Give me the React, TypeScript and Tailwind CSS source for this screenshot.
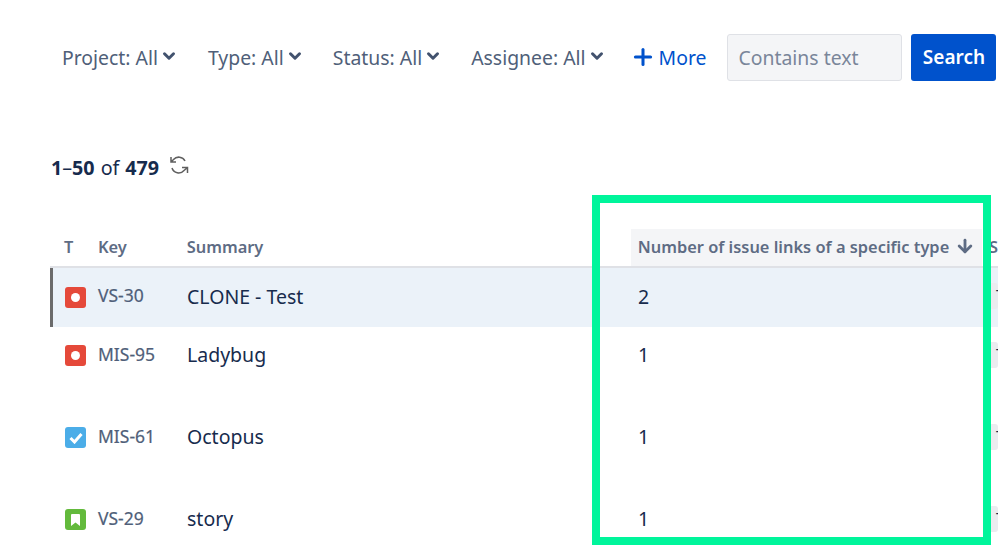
import { ChevronDown, Plus, ArrowDown } from "lucide-react";

const filters = [
  { label: "Project: All", gap: "mr-[30px]" },
  { label: "Type: All", gap: "mr-[29px]" },
  { label: "Status: All", gap: "mr-[29px]" },
  { label: "Assignee: All", gap: "mr-[24px]" },
];

function TypeIcon({ kind }: { kind: "bug" | "task" | "story" }) {
  if (kind === "bug") {
    return (
      <span className="flex h-[21px] w-[21px] items-center justify-center rounded-[3px] bg-[#e5493a]">
        <span className="h-[9px] w-[9px] rounded-full bg-white" />
      </span>
    );
  }
  if (kind === "task") {
    return (
      <span className="flex h-[21px] w-[21px] items-center justify-center rounded-[3px] bg-[#4bade8]">
        <svg width="14" height="12" viewBox="0 0 14 12" fill="none">
          <path d="M1.5 6 L5.5 10 L12.5 2" stroke="white" strokeWidth="3" />
        </svg>
      </span>
    );
  }
  return (
    <span className="flex h-[21px] w-[21px] items-center justify-center rounded-[3px] bg-[#63ba3c]">
      <svg width="9" height="12" viewBox="0 0 9 12">
        <path d="M0 1 Q0 0 1 0 H8 Q9 0 9 1 V12 L4.5 8.5 L0 12 Z" fill="white" />
      </svg>
    </span>
  );
}

const rows = [
  { kind: "bug", key: "VS-30", summary: "CLONE - Test", count: "2", selected: true },
  { kind: "bug", key: "MIS-95", summary: "Ladybug", count: "1", selected: false },
  { kind: "task", key: "MIS-61", summary: "Octopus", count: "1", selected: false },
  { kind: "story", key: "VS-29", summary: "story", count: "1", selected: false },
] as const;

export default function App() {
  return (
    <div className="relative h-[552px] w-[998px] overflow-hidden bg-white pt-[34px] font-['Noto_Sans',sans-serif] text-[#172b4d]">
      {/* filter bar */}
      <div className="flex h-[47px] items-center pl-[62px]">
        {filters.map((f) => (
          <div key={f.label} className={`${f.gap} flex items-center gap-[2px] text-[19.4px] text-[#505f79]`}>
            <span>{f.label}</span>
            <ChevronDown size={18} strokeWidth={4} className="mb-[3px] text-[#42526e]" />
          </div>
        ))}
        <div className="mr-[21px] flex items-center gap-[3px] text-[19.4px] text-[#0052cc]">
          <Plus size={26} strokeWidth={2.8} />
          <span>More</span>
        </div>
        <div className="mr-[9px] flex h-[47px] w-[175px] shrink-0 items-center rounded-[3px] border border-[#dfe1e6] bg-[#f4f5f7] pl-[10px] text-[19.4px] text-[#7a869a]">
          Contains text
        </div>
        <div className="flex h-[47px] w-[85px] shrink-0 items-center justify-center rounded-[3px] bg-[#0052cc] text-[19px] font-semibold text-white">
          Search
        </div>
      </div>

      {/* results count */}
      <div className="mt-[72px] flex h-[30px] items-center pl-[51px] text-[19.7px]">
        <span className="font-bold">1</span>
        <span>–</span>
        <span className="font-bold">50</span>
        <span className="mx-[6px]">of</span>
        <span className="font-bold">479</span>
        <svg width="20" height="20" viewBox="0 0 20 20" fill="none" stroke="#5f5f5f" strokeWidth="1.5" className="mb-[7px] ml-[10px]">
          <path d="M16 6 A7 7 0 0 0 4.5 4.5 L2.5 6.5 M2 2 V7 H7" />
          <path d="M3 13 A7 7 0 0 0 15 15.5 L18 13 M18.5 18 V12.5 H13" />
        </svg>
      </div>

      {/* table */}
      <div className="mt-[46px]">
        <div className="ml-[50px] flex h-[39px] items-stretch border-b-2 border-[#dfe1e6] text-[16.4px] font-semibold text-[#5e6c84]">
          <div className="flex w-[48px] items-center pl-[14px]">T</div>
          <div className="flex w-[89px] items-center">Key</div>
          <div className="flex w-[445px] items-center">Summary</div>
          <div className="flex w-[352px] items-center justify-between bg-[#f4f5f7] pl-[7px] pr-[7px]">
            <span>Number of issue links of a specific type</span>
            <ArrowDown size={20} strokeWidth={3.4} className="mb-[3px]" />
          </div>
          <div className="flex items-center pl-[7px]">S</div>
        </div>
        {rows.map((r) => (
          <div
            key={r.key}
            className={
              r.selected
                ? "ml-[50px] flex h-[59px] items-start border-l-[3px] border-[#6b6b6b] bg-[#ebf2f9]"
                : "ml-[50px] flex h-[82px] items-start border-l-[3px] border-transparent"
            }
          >
            <div className={r.selected ? "flex w-[45px] pl-[12px] pt-[19px]" : "flex w-[45px] pl-[12px] pt-[18px]"}>
              <TypeIcon kind={r.kind} />
            </div>
            <div className="w-[89px] pt-[14px] text-[17.5px] text-[#505f79] [-webkit-text-stroke:0.2px_#505f79]">{r.key}</div>
            <div className={r.selected ? "w-[445px] pt-[14px] text-[19.5px]" : "w-[445px] pt-[13px] text-[19.5px]"}>{r.summary}</div>
            <div className={r.selected ? "w-[352px] pl-[6px] pt-[14px] text-[19.5px]" : "w-[352px] pl-[6px] pt-[13px] text-[19.5px]"}>{r.count}</div>
            <div className="ml-[4px] mt-[15px] h-[26px] flex-1 overflow-hidden rounded-[3px] bg-[#ebecf0] pl-[8px] text-[16px] leading-[26px]">T</div>
          </div>
        ))}
      </div>

      {/* green highlight drawn over the screenshot */}
      <div className="pointer-events-none absolute left-[592px] top-[195px] h-[350px] w-[399px] border-[8px] border-[#00f59b]" />
    </div>
  );
}
